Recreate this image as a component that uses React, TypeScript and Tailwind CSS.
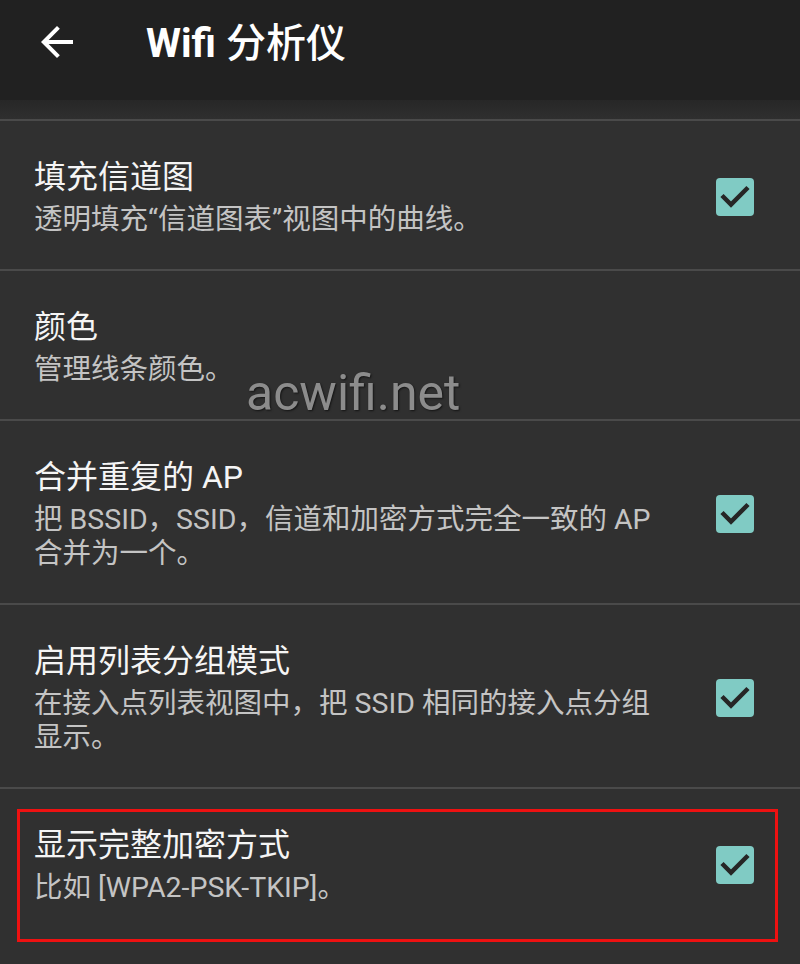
import React from "react";

const FONT = { fontFamily: 'Roboto, "Noto Sans CJK SC", sans-serif' };

function Check() {
  return (
    <svg width="38" height="38" viewBox="0 0 38 38" className="shrink-0">
      <rect x="0" y="0" width="38" height="38" rx="4" fill="#80cbc4" />
      <path d="M6 17.5 L15 26.5 L32 9.5" fill="none" stroke="#262626" strokeWidth="4.5" strokeLinecap="butt" strokeLinejoin="miter" />
    </svg>
  );
}

type RowProps = { title: string; lines: string[]; checked?: boolean; children?: React.ReactNode };

function Row({ title, lines, checked, children }: RowProps) {
  return (
    <div className="relative border-t-2 border-[#4a4a4a] flex items-center pl-[34px] pr-[46px] pt-[36px] pb-[32px]">
      <div className="flex-1 min-w-0">
        <div className="text-[32px] leading-[40px] text-[#f5f5f5]">{title}</div>
        <div className="mt-[6px] text-[28.5px] leading-[34px] text-[#c4c4c4]">
          {lines.map((l, i) => (
            <div key={i} className="whitespace-nowrap">{l}</div>
          ))}
        </div>
      </div>
      {checked && <Check />}
      {children}
    </div>
  );
}

export default function App() {
  return (
    <div className="w-[800px] h-[964px] overflow-hidden bg-[#303030] relative" style={FONT}>
      <div className="h-[100px] bg-[#212121] flex items-center pb-[12px] relative z-10">
        <svg width="48" height="48" viewBox="0 0 24 24" className="ml-[33px] -mt-[4px]">
          <path d="M20 11H7.83l5.59-5.59L12 4l-8 8 8 8 1.41-1.41L7.83 13H20v-2z" fill="#ffffff" />
        </svg>
        <div className="ml-[65px] text-[40px] leading-[48px] text-white">
          <span className="font-bold">Wifi</span>
          <span className="font-medium"> 分析仪</span>
        </div>
      </div>
      <div className="h-[19px] bg-gradient-to-b from-[#272727] to-[#2f2f2f]" />
      <Row title="填充信道图" lines={["透明填充“信道图表”视图中的曲线。"]} checked />
      <Row title="颜色" lines={["管理线条颜色。"]} />
      <Row title="合并重复的 AP" lines={["把 BSSID，SSID，信道和加密方式完全一致的 AP", "合并为一个。"]} checked />
      <Row title="启用列表分组模式" lines={["在接入点列表视图中，把 SSID 相同的接入点分组", "显示。"]} checked />
      <Row title="显示完整加密方式" lines={["比如 [WPA2-PSK-TKIP]。"]} checked>
        <div className="absolute left-[17px] top-[20px] w-[761px] h-[133px] border-[3px] border-[#ee1111] pointer-events-none" />
      </Row>
      <div
        className="absolute left-[246px] top-[368px] text-[50px] leading-[50px] text-[#8c8c8c] whitespace-nowrap"
        style={{ ...FONT, textShadow: "1px 1px 2px rgba(0,0,0,0.6)" }}
      >
        acwifi.net
      </div>
    </div>
  );
}
